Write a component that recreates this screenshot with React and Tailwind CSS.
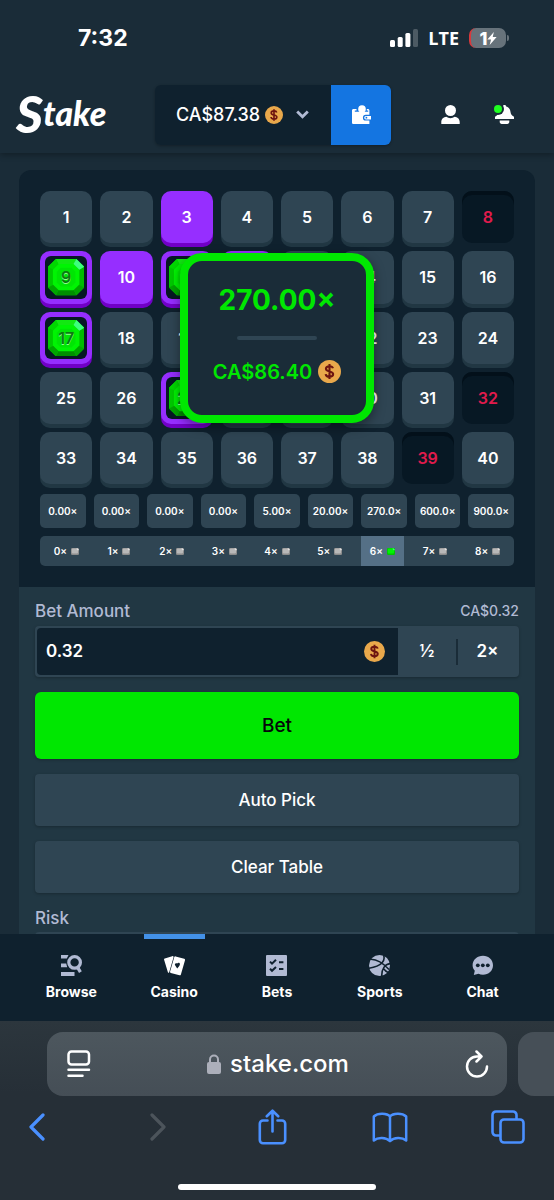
import { useState } from "react";

const HITS = [9, 11, 12, 17, 20, 27];
const MISSES = [8, 32, 39];
const PAYOUTS = ["0.00×", "0.00×", "0.00×", "0.00×", "5.00×", "20.00×", "270.0×", "600.0×", "900.0×"];

const NAV = [
  { label: "Browse", Icon: BrowseIcon },
  { label: "Casino", Icon: CasinoIcon, active: true },
  { label: "Bets", Icon: BetsIcon },
  { label: "Sports", Icon: SportsIcon },
  { label: "Chat", Icon: ChatIcon },
];

/* Icons */
function BrowseIcon() {
  return (
    <svg viewBox="0 0 21 21" className="size-[21px]" fill="#b1bad3">
      <path d="M0 0h7.500L5.800 3.600H0zM0 8.600h5.200l1 3.600H0zM0 17h13.500v4H0z" />
      <circle cx="13.600" cy="7.400" r="5.800" fill="none" stroke="#b1bad3" strokeWidth="3.200" />
      <path d="M15.200 13.200l2.800-1.600 2.800 4.600-2.800 1.800z" />
    </svg>
  );
}

function CasinoIcon() {
  return (
    <svg viewBox="0 0 21 21" className="size-[21px]" fill="#fff">
      <path d="M.8 3.400L8.200 1.200c1-.3 1.600.2 1.300 1.200L5.200 17.200c-.3.8-1 .7-1.300 0L.1 4.700c-.2-.6.1-1.100.7-1.300z" />
      <path d="M11.600 1.400l8.600 2.400c.7.2 1 .7.8 1.400l-4.100 14.300c-.2.7-.7 1-1.400.8l-8.700-2.400c-.7-.2-.9-.7-.7-1.400l4.100-14.300c.2-.7.7-1 1.400-.8z" />
      <path d="M13.200 13.400l-2.100-3.200c-.9-1.400.9-2.700 2.100-1.600.8-1.400 3.100-.8 2.700.9-.2 1.200-1.600 2.600-2.700 3.900z" fill="#0f212e" />
    </svg>
  );
}

function BetsIcon() {
  return (
    <svg viewBox="0 0 21 21" className="size-[21px]">
      <rect width="21" height="21" rx="1" fill="#b1bad3" />
      <path d="M4 6.600l2 2 4-3.800M4 13.800l2 2 4-3.800M13 7.200h4.400M13 14h4.400" fill="none" stroke="#0f212e" strokeWidth="2" />
    </svg>
  );
}

function SportsIcon() {
  return (
    <svg viewBox="0 0 21 21" className="size-[21px]">
      <circle cx="10.500" cy="10.500" r="10.500" fill="#b1bad3" />
      <path
        d="M1.500 4.200C8 4 15.500 9.500 20 14.500M14.500 0c2 5-1 11.500-14.500 13.200M21 8.600c-5 .5-8.500 5.400-8.200 12.400M14.400 13.600c1.200 1.600 2.600 3 4.600 3.800"
        fill="none"
        stroke="#0f212e"
        strokeWidth="1.600"
      />
    </svg>
  );
}

function ChatIcon() {
  return (
    <svg viewBox="0 0 21 21" className="size-[21px]">
      <path d="M11 .8c5.600 0 10 4 10 9.400s-4.400 9.500-10 9.500c-1.700 0-3.200-.3-4.500-.9L1.800 20l1-4.300C1.400 14.200.6 12.300.6 10.200.6 4.800 5.300.8 11 .8z" fill="#b1bad3" />
      <circle cx="5.800" cy="10.300" r="1.900" fill="#0f212e" />
      <circle cx="10.800" cy="10.300" r="1.900" fill="#0f212e" />
      <circle cx="15.800" cy="10.300" r="1.900" fill="#0f212e" />
    </svg>
  );
}

function Coin({ className }) {
  return (
    <svg viewBox="0 0 24 24" className={className}>
      <circle cx="12" cy="12" r="12" fill="#e9a84b" />
      <path
        d="M15.600 8.700c-.3-1.300-1.600-2.200-3.600-2.200-2.200 0-3.700 1-3.700 2.700 0 3.700 7.500 1.900 7.500 5.500 0 1.700-1.600 2.800-3.800 2.800-2.300 0-3.800-1.100-4-2.800M12 4.300v15.400"
        fill="none"
        stroke="#6d1410"
        strokeWidth="2.200"
      />
    </svg>
  );
}

function Gem() {
  return (
    <svg viewBox="0 0 37 37" className="absolute inset-0 size-full">
      <path d="M8 0h21l8 8v21l-8 8H8l-8-8V8z" fill="#00c900" />
      <path d="M8 0h21l-3 6H11z" fill="#12e812" />
      <path d="M0 8L8 0l3 6-5 5z" fill="#00d800" />
      <path d="M37 8l-6 3v15l6 3z" fill="#00bb00" />
      <path d="M8 37l3-6h15l3 6z" fill="#008f00" />
      <path d="M0 29l6-3 5 5-3 6zM37 29l-6-3-5 5 3 6z" fill="#00a600" />
      <path d="M11 5h15l6 6v15l-6 6H11l-6-6V11z" fill="#00f403" />
      <path d="M13 9h11l4 4v11l-4 4H13l-4-4V13z" fill="#00e504" />
      <path d="M29 0l8 8-5 3-6-6z" fill="#3dff7c" />
    </svg>
  );
}

function MiniGem({ on }) {
  return (
    <svg viewBox="0 0 8 7" className="h-[7px] w-2">
      <rect width="8" height="7" rx="1.200" fill={on ? "#00c800" : "#8c8c8c"} />
      <rect x=".8" y=".6" width="6.200" height="5" rx="1" fill={on ? "#00f403" : "#b8b8b8"} />
      <path d="M6 0l2 1.800-1 .6L5.500 1z" fill={on ? "#3dff7c" : "#e6e6e6"} />
    </svg>
  );
}

function Tile({ n, picked, onPick }) {
  if (HITS.includes(n)) {
    return (
      <button
        onClick={() => onPick(n)}
        className="relative flex aspect-square items-center justify-center rounded-[10px] bg-[#962eff] p-[5px] shadow-[0_4px_0_#7100c7]"
      >
        <span className="flex size-full items-center justify-center rounded-md bg-[#071824] p-[3px]">
          <span className="relative flex size-full items-center justify-center">
            <Gem />
            <span className="relative text-[#0c7a12] [text-shadow:0_1px_0_#8dff8f]">{n}</span>
          </span>
        </span>
      </button>
    );
  }
  if (MISSES.includes(n)) {
    return (
      <button
        onClick={() => onPick(n)}
        className="flex aspect-square items-center justify-center rounded-[10px] bg-[#071824] text-[#e01b4c] shadow-[inset_0_4px_0_#03101a]"
      >
        {n}
      </button>
    );
  }
  return (
    <button
      onClick={() => onPick(n)}
      className={
        picked
          ? "flex aspect-square items-center justify-center rounded-[10px] bg-[#962eff] shadow-[0_4px_0_#7100c7]"
          : "flex aspect-square items-center justify-center rounded-[10px] bg-[#2f4553] shadow-[0_4px_0_#213743]"
      }
    >
      {n}
    </button>
  );
}

function StatusBar() {
  return (
    <div className="flex h-[76px] items-center justify-between pr-12 pl-[78px]">
      <span className="text-[23px] font-bold">7:32</span>
      <div className="flex items-center gap-[10px]">
        <svg viewBox="0 0 28 18" className="h-[18px] w-7" fill="#fff">
          <rect y="11" width="5" height="7" rx="1.500" />
          <rect x="7.700" y="8" width="5" height="10" rx="1.500" />
          <rect x="15.400" y="4" width="5" height="14" rx="1.500" />
          <rect x="23" y="0" width="5" height="18" rx="1.500" opacity=".22" />
        </svg>
        <span className="font-['Open_Sans',sans-serif] text-[18px] font-bold">LTE</span>
        <div className="relative flex h-5 w-[37px] items-center justify-center rounded-[7px] border-l-2 border-[#d8393c] bg-[#67737b] text-[18px] font-extrabold">
          1
          <svg viewBox="0 0 10 14" className="h-[13px] w-[10px]" fill="#fff">
            <path d="M7 0L0 8h4L2.500 14 10 5.500H5.800z" />
          </svg>
          <span className="absolute -right-[3px] h-1.5 w-0.5 rounded-r bg-[#67737b]" />
        </div>
      </div>
    </div>
  );
}

function Header() {
  return (
    <header className="relative z-10 bg-[#1a2c38] shadow-[0_2px_6px_rgba(0,0,0,0.3)]">
      <StatusBar />
      <div className="flex h-[77px] items-center pr-10 pl-4">
        <a href="#home" className="flex w-[139px] items-center pb-1 font-['Lato',sans-serif] text-[34px] leading-none font-black italic">
          <span className="text-[52px] leading-none">S</span>take
        </a>
        <div className="flex h-[60px] overflow-hidden rounded-md shadow-[0_1px_3px_rgba(0,0,0,0.3)]">
          <button className="flex items-center gap-[5px] bg-[#0f212e] pr-[22px] pl-[21px] text-[18px] font-medium">
            CA$87.38
            <Coin className="size-[18px]" />
            <svg viewBox="0 0 13 9" className="ml-2 h-[9px] w-[13px]">
              <path d="M1.200 1.400l5.300 5.400 5.300-5.400" fill="none" stroke="#b1bad3" strokeWidth="2.800" />
            </svg>
          </button>
          <button aria-label="Wallet" className="flex w-[60px] items-center justify-center bg-[#1475e1]">
            <svg viewBox="0 0 19 19" className="size-[19px]" fill="#fff">
              <circle cx="10" cy="4" r="3.800" />
              <path d="M1.500 4h3v1.400H2.800v1.300h13.400V5.400h-1.400V4h1c1 0 1.600.7 1.600 1.600V9.800h-3.600a2.900 2.900 0 0 0 0 5.800h3.600V19H1.600C.7 19 0 18.300 0 17.400V5.500C0 4.600.6 4 1.500 4z" />
              <path d="M14 10.900h5v3.600h-5a1.800 1.800 0 0 1 0-3.600z" />
              <circle cx="14.400" cy="12.700" r=".9" fill="#1475e1" />
            </svg>
          </button>
        </div>
        <div className="ml-auto flex items-center gap-[35px]">
          <button aria-label="Account">
            <svg viewBox="0 0 19 19" className="size-[19px]" fill="#fff">
              <circle cx="9.500" cy="5.500" r="5.500" />
              <path d="M.3 19v-2c0-3 2.400-5 5-5.200 2.300 1.800 6 1.800 8.400 0 2.600.2 5 2.200 5 5.200v2z" />
            </svg>
          </button>
          <button aria-label="Notifications" className="relative">
            <svg viewBox="0 0 19 19" className="size-[19px]" fill="#fff">
              <path d="M9.500 0c1 0 1.600.6 1.700 1.400 2.600.8 4 2.800 4.300 5.600.3 2.200 1.200 3.600 3.500 4.800V14H0v-2.200c2.300-1.200 3.200-2.600 3.500-4.800.3-2.800 1.700-4.800 4.300-5.600C7.900.6 8.500 0 9.500 0zM4.700 15.600h9.600v1.200c0 1.300-.8 2.200-2 2.200H6.700c-1.200 0-2-.9-2-2.200z" />
            </svg>
            <span className="absolute top-0 -left-px size-2 rounded-full bg-[#1fff20] ring-2 ring-[#1a2c38]" />
          </button>
        </div>
      </div>
    </header>
  );
}

function WinPopup() {
  return (
    <div className="pointer-events-none absolute inset-0 flex items-center justify-center">
      <div className="flex h-[170px] w-[194px] flex-col items-center justify-center gap-5 rounded-[22px] border-8 border-[#00e701] bg-[#1a2c38] pb-2 font-bold text-[#00e701] shadow-[0_4px_12px_rgba(0,0,0,0.4)]">
        <span className="text-[28px] leading-8">270.00×</span>
        <span className="h-1 w-20 rounded-full bg-[#2f4553]" />
        <span className="flex items-center gap-1.5 text-[20px] leading-6 font-semibold">
          CA$86.40
          <Coin className="size-[23px]" />
        </span>
      </div>
    </div>
  );
}

function Board({ picks, onPick }) {
  return (
    <section className="rounded-t-xl bg-[#0f212e] p-[21px]">
      <div className="relative">
        <div className="grid grid-cols-8 gap-2 text-[16px] font-semibold">
          {Array.from({ length: 40 }, (_, i) => (
            <Tile key={i} n={i + 1} picked={picks.includes(i + 1)} onPick={onPick} />
          ))}
        </div>
        <WinPopup />
      </div>

      <div className="mt-[10px] grid grid-cols-9 gap-2 text-[10px] font-semibold">
        {PAYOUTS.map((p, i) => (
          <div key={i} className="flex h-[34px] items-center justify-center rounded-[5px] bg-[#2f4553]">
            {p}
          </div>
        ))}
      </div>

      <div className="mt-2 grid grid-cols-9 gap-[10px] rounded-[5px] bg-[#2f4553] px-[5px] text-[10px] font-semibold">
        {PAYOUTS.map((_, i) => (
          <div
            key={i}
            className={
              i === 6
                ? "flex h-[30px] items-center justify-center gap-1 bg-[#557086]"
                : "flex h-[30px] items-center justify-center gap-1"
            }
          >
            {i}×
            <MiniGem on={i === 6} />
          </div>
        ))}
      </div>
    </section>
  );
}

function Controls({ onAutoPick, onClear }) {
  const [bet, setBet] = useState("0.32");
  const scale = (by) => setBet((Number(bet) * by).toFixed(2));

  return (
    <section className="flex flex-col gap-[15px] bg-[#213743] px-4 pt-[14px] pb-4">
      <div className="flex flex-col gap-[5px]">
        <div className="flex items-center justify-between leading-5 font-medium text-[#b1bad3]">
          <label htmlFor="bet" className="text-[17px] leading-5">Bet Amount</label>
          <span className="text-[14px]">CA$0.32</span>
        </div>
        <div className="flex h-[51px] rounded bg-[#2f4553] p-0.5 text-[17px] font-semibold shadow-[0_1px_3px_rgba(0,0,0,0.25)]">
          <div className="flex flex-1 items-center rounded-l-sm bg-[#0f212e] pr-[13px] pl-[9px]">
            <input
              id="bet"
              value={bet}
              onChange={(e) => setBet(e.target.value)}
              className="w-full min-w-0 flex-1 bg-transparent outline-none"
            />
            <Coin className="size-[21px]" />
          </div>
          <button onClick={() => scale(0.5)} className="w-[58px]">½</button>
          <span className="h-[26px] w-0.5 self-center bg-[#1a2c38]" />
          <button onClick={() => scale(2)} className="w-[59px]">2×</button>
        </div>
      </div>

      <button className="h-[67px] rounded-md bg-[#00e701] text-[19px] font-medium text-[#05080a] shadow-[0_1px_3px_rgba(0,0,0,0.25)]">
        Bet
      </button>
      <button
        onClick={onAutoPick}
        className="h-[52px] rounded bg-[#2f4553] text-[17px] font-medium shadow-[0_1px_3px_rgba(0,0,0,0.25)]"
      >
        Auto Pick
      </button>
      <button
        onClick={onClear}
        className="h-[52px] rounded bg-[#2f4553] text-[17px] font-medium shadow-[0_1px_3px_rgba(0,0,0,0.25)]"
      >
        Clear Table
      </button>

      <div className="flex flex-col gap-1">
        <label htmlFor="risk" className="text-[17px] leading-5 font-medium text-[#b1bad3]">Risk</label>
        <select id="risk" className="h-[51px] rounded border-2 border-[#2f4553] bg-[#0f212e] px-2 text-[17px]" />
      </div>
    </section>
  );
}

function BottomNav() {
  return (
    <nav className="grid h-[87px] shrink-0 grid-cols-5 bg-[#0f212e] px-5">
      {NAV.map(({ label, Icon, active }) => (
        <a key={label} href="#nav" className="flex flex-col items-center text-[14px] leading-5 font-bold">
          <span className={active ? "h-[5px] w-[61px] bg-[#4391e7]" : "h-[5px] w-[61px]"} />
          <span className="mt-4 mb-1.5">
            <Icon />
          </span>
          {label}
        </a>
      ))}
    </nav>
  );
}

function BrowserBar() {
  return (
    <footer className="shrink-0 overflow-hidden bg-linear-to-b from-[#2c363d] to-[#262f37] to-40%">
      <div className="flex gap-[11px] pt-[11px] pl-[47px]">
        <div className="flex h-16 flex-1 items-center justify-between rounded-2xl bg-linear-to-b from-[#4d575e] to-[#454e56] pr-[18px] pl-5">
          <button aria-label="Page settings">
            <svg viewBox="0 0 24 28" className="h-7 w-6" fill="none" stroke="#fff" strokeWidth="2.500" strokeLinecap="round">
              <rect x="1.500" y="1.500" width="20.500" height="13" rx="3" />
              <path d="M1.500 19.700h20.500M1.500 25.700h14" />
            </svg>
          </button>
          <span className="flex items-center gap-2 text-[24px] font-medium">
            <svg viewBox="0 0 15 20" className="h-5 w-[15px]">
              <rect y="8" width="14" height="12" rx="2" fill="#acafba" />
              <path d="M3 9V5.500a4 4 0 0 1 8 0V9" fill="none" stroke="#acafba" strokeWidth="2" />
            </svg>
            stake.com
          </span>
          <button aria-label="Reload">
            <svg viewBox="0 0 24 28" className="h-7 w-6" fill="none" stroke="#fff" strokeWidth="2.500" strokeLinecap="round" strokeLinejoin="round">
              <path d="M16.500 6.500H12A10 10 0 1 0 22 16.500M11.500 1.500l5 5-5 5" />
            </svg>
          </button>
        </div>
        <div className="w-9 rounded-l-2xl bg-[#464f57]" />
      </div>

      <div className="flex h-[62px] items-center justify-between pr-7 pl-[19px] text-[#4a90ff]">
        <button aria-label="Back" className="flex w-9 justify-center">
          <svg viewBox="0 0 18 28" className="h-7 w-[18px]" fill="none" stroke="currentColor" strokeWidth="3.200" strokeLinecap="round" strokeLinejoin="round">
            <path d="M15 2L3 14l12 12" />
          </svg>
        </button>
        <button aria-label="Forward" className="flex w-9 justify-end pr-1.5 text-[#4c545b]">
          <svg viewBox="0 0 18 28" className="h-7 w-[18px]" fill="none" stroke="currentColor" strokeWidth="3.200" strokeLinecap="round" strokeLinejoin="round">
            <path d="M3 2l12 12L3 26" />
          </svg>
        </button>
        <button aria-label="Share" className="flex w-9 justify-center">
          <svg viewBox="0 0 29 36" className="h-9 w-[29px]" fill="none" stroke="currentColor" strokeWidth="2.600" strokeLinecap="round" strokeLinejoin="round">
            <path d="M9.500 11.500H5a3.200 3.200 0 0 0-3.200 3.200V31A3.200 3.200 0 0 0 5 34.200h19a3.200 3.200 0 0 0 3.200-3.200V14.700a3.200 3.200 0 0 0-3.200-3.200h-4.500M14.500 22.500V2M8.800 7.300l5.700-5.600 5.700 5.600" />
          </svg>
        </button>
        <button aria-label="Bookmarks" className="flex w-9 justify-center">
          <svg viewBox="0 0 36 31" className="h-[31px] w-9" fill="none" stroke="currentColor" strokeWidth="2.500" strokeLinejoin="round">
            <path d="M18 4.500C15 1 6 .5 1.800 4.500v24c4-3.400 12.200-3.400 16.200.6 4-4 12.200-4 16.200-.6v-24C30 .5 21 1 18 4.500zM18 4.500v24.600" />
          </svg>
        </button>
        <button aria-label="Tabs" className="flex w-9 justify-center">
          <svg viewBox="0 0 34 34" className="size-[34px]" fill="none" stroke="currentColor" strokeWidth="2.600">
            <rect x="9.500" y="9.500" width="23" height="23" rx="3.500" />
            <path d="M9.500 25.500H5A3.500 3.500 0 0 1 1.500 22V5A3.500 3.500 0 0 1 5 1.500h17A3.500 3.500 0 0 1 25.500 5v4.500" />
          </svg>
        </button>
      </div>
      <div className="flex h-[42px] items-center justify-center pt-4">
        <span className="h-1.5 w-[198px] rounded-full bg-white" />
      </div>
    </footer>
  );
}

export default function App() {
  const [picks, setPicks] = useState([3, 10]);

  const toggle = (n) => {
    setPicks(picks.includes(n) ? picks.filter((p) => p !== n) : [...picks, n]);
  };

  return (
    <div className="flex h-screen flex-col overflow-hidden bg-[#1a2c38] font-['Inter',sans-serif] text-white">
      <Header />
      <main className="min-h-0 flex-1 overflow-hidden px-[19px] pt-[17px]">
        <Board picks={picks} onPick={toggle} />
        <Controls onAutoPick={() => setPicks([3, 10])} onClear={() => setPicks([])} />
      </main>
      <BottomNav />
      <BrowserBar />
    </div>
  );
}
